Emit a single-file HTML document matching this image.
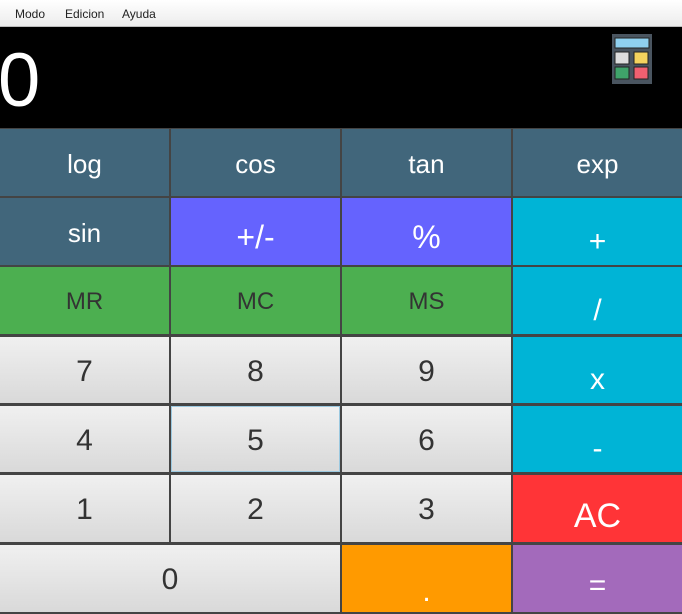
<html><head><style>
body{margin:0;width:682px;height:614px;overflow:hidden;background:#444;font-family:"Liberation Sans",sans-serif;position:relative}
.m{position:absolute;left:0;top:0;width:682px;height:26px;background:linear-gradient(#fff,#ececec);border-bottom:1px solid #bbb;font-size:12px;color:#222}
.m span{position:absolute;top:7px}
.d{position:absolute;left:0;top:27px;width:682px;height:101px;background:#000;color:#fff}
.b{position:absolute;display:flex;align-items:center;justify-content:center;font-size:26px;color:#fff;box-sizing:border-box;padding-top:3px}
.g{background:linear-gradient(#f0f0f0,#d9d9d9);color:#333;font-size:30px}
.s{background:#41667b}.p{background:#6563fe;font-size:32px;padding-top:12px}.gr{background:#4caf50;color:#333;font-size:24px}
.c{background:#00b4d6;font-size:30px;padding-top:20px}
</style></head><body>
<div class="m"><span style="left:15px">Modo</span><span style="left:65px">Edicion</span><span style="left:122px">Ayuda</span></div>
<div class="d"><div style="position:absolute;left:-2px;top:16px;font-size:76px;line-height:1">0</div>
<svg style="position:absolute;left:612px;top:7px" width="40" height="50" viewBox="0 0 40 50"><rect x="0" y="0" width="40" height="50" fill="#4a5560"/><rect x="3" y="4" width="34" height="10" fill="#8fd0ef" stroke="#222"/><rect x="3" y="18" width="14" height="12" fill="#ddd" stroke="#222"/><rect x="22" y="18" width="14" height="12" fill="#f4d35e" stroke="#222"/><rect x="3" y="33" width="14" height="12" fill="#3fa36a" stroke="#222"/><rect x="22" y="33" width="14" height="12" fill="#f06070" stroke="#222"/></svg></div>
<div class="b s" style="left:0;top:129px;width:169px;height:67px">log</div>
<div class="b s" style="left:171px;top:129px;width:169px;height:67px">cos</div>
<div class="b s" style="left:342px;top:129px;width:169px;height:67px">tan</div>
<div class="b s" style="left:513px;top:129px;width:169px;height:67px">exp</div>
<div class="b s" style="left:0;top:198px;width:169px;height:67px">sin</div>
<div class="b p" style="left:171px;top:198px;width:169px;height:67px">+/-</div>
<div class="b p" style="left:342px;top:198px;width:169px;height:67px">%</div>
<div class="b c" style="left:513px;top:198px;width:169px;height:67px">+</div>
<div class="b gr" style="left:0;top:267px;width:169px;height:67px">MR</div>
<div class="b gr" style="left:171px;top:267px;width:169px;height:67px">MC</div>
<div class="b gr" style="left:342px;top:267px;width:169px;height:67px">MS</div>
<div class="b c" style="left:513px;top:267px;width:169px;height:67px">/</div>
<div class="b g" style="left:0;top:337px;width:169px;height:66px">7</div>
<div class="b g" style="left:171px;top:337px;width:169px;height:66px">8</div>
<div class="b g" style="left:342px;top:337px;width:169px;height:66px">9</div>
<div class="b c" style="left:513px;top:337px;width:169px;height:66px">x</div>
<div class="b g" style="left:0;top:406px;width:169px;height:66px">4</div>
<div class="b g" style="left:171px;top:406px;width:169px;height:66px;border:1px solid #9cc9e0">5</div>
<div class="b g" style="left:342px;top:406px;width:169px;height:66px">6</div>
<div class="b c" style="left:513px;top:406px;width:169px;height:66px">-</div>
<div class="b g" style="left:0;top:475px;width:169px;height:67px">1</div>
<div class="b g" style="left:171px;top:475px;width:169px;height:67px">2</div>
<div class="b g" style="left:342px;top:475px;width:169px;height:67px">3</div>
<div class="b" style="left:513px;top:475px;width:169px;height:67px;background:#ff3437;font-size:34px;padding-top:16px">AC</div>
<div class="b g" style="left:0;top:545px;width:340px;height:67px">0</div>
<div class="b" style="left:342px;top:545px;width:169px;height:67px;background:#ff9a00;font-size:30px;padding-top:26px">.</div>
<div class="b" style="left:513px;top:545px;width:169px;height:67px;background:#a36abb;font-size:30px;padding-top:14px">=</div>
</body></html>
